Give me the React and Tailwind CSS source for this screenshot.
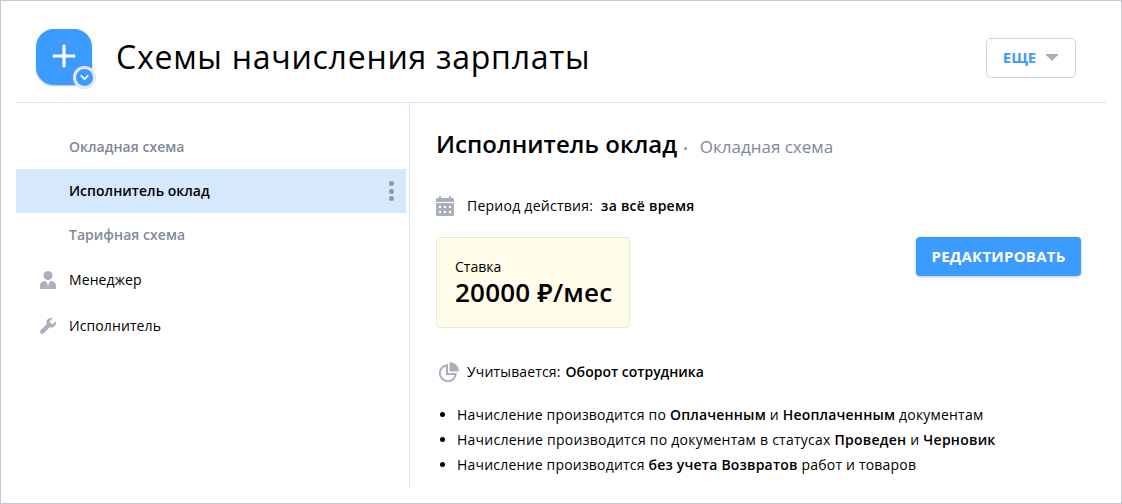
import React from 'react';
import { ChevronDown, Plus } from 'lucide-react';

const font = { fontFamily: '"Open Sans", "Noto Sans", sans-serif' };

const ManagerIcon = () => (
  <svg width="16" height="18" viewBox="0 0 16 18" fill="#a9afbb">
    <circle cx="8" cy="4.500" r="4.500" />
    <path d="M0 18v-3.500C0 11.600 2.600 10 5.600 10L7 12.500 6.500 18zM16 18v-3.500C16 11.600 13.400 10 10.400 10L9 12.500 9.500 18zM7.300 13h1.400l.5 5H6.800z" />
  </svg>
);

const WrenchIcon = () => (
  <svg width="16" height="16" viewBox="0 0 16 16" fill="#a9afbb">
    <path d="M15.800 3.400 13 6.100l-2.400-.7-.7-2.400L12.600.2C10.800-.4 8.700.1 7.500 1.500 6.300 2.800 6 4.700 6.600 6.300L.6 12.300c-.8.8-.8 2.200 0 3 .8.900 2.200.900 3.100 0l6-6c1.600.6 3.500.3 4.800-1 1.400-1.300 1.900-3.300 1.300-4.900z" />
  </svg>
);

const CalendarIcon = () => (
  <svg width="18" height="20" viewBox="0 0 18 20" fill="#a9afbb">
    <path d="M3 0h2v2h8V0h2v2h1.500C17.300 2 18 2.700 18 3.500V6H0V3.500C0 2.700.7 2 1.500 2H3z" />
    <path fillRule="evenodd" d="M0 7h18v11.500c0 .8-.7 1.500-1.500 1.500h-15C.7 20 0 19.300 0 18.500zm3 3v2h2v-2zm5 0v2h2v-2zm5 0v2h2v-2zM3 15v2h2v-2zm5 0v2h2v-2zm5 0v2h2v-2z" />
  </svg>
);

const PieIcon = () => (
  <svg width="20" height="20" viewBox="0 0 20 20" fill="none">
    <path d="M8 3.200a8 8 0 1 0 8.800 8.800H8z" stroke="#a9afbb" strokeWidth="2" />
    <path d="M10.500 0A9.500 9.500 0 0 1 20 9.500h-9.500z" fill="#a9afbb" />
  </svg>
);

const SideItem = ({ label, icon, active, muted, className = 'h-11' }) => (
  <div className={`flex items-center text-[14px] ${className} ${active ? 'bg-[#d5e8fc] text-black font-semibold tracking-[0.03px]' : muted ? 'text-[#7f8998] font-semibold tracking-[0.03px]' : 'text-black font-medium tracking-[0.1px]'}`}>
    <div className="w-[53px] flex justify-end pr-[13px]">{icon}</div>
    <span className="mb-[2px]">{label}</span>
    {active && (
      <div className="ml-auto mr-[12px] flex flex-col gap-[2.500px]">
        <i className="block w-[5px] h-[5px] rounded-full bg-[#8f98a6]" />
        <i className="block w-[5px] h-[5px] rounded-full bg-[#8f98a6]" />
        <i className="block w-[5px] h-[5px] rounded-full bg-[#8f98a6]" />
      </div>
    )}
  </div>
);

export default function App() {
  return (
    <div style={font} className="w-[1122px] h-[504px] bg-white border border-[#c6c9d0] px-[15px] overflow-hidden text-black">
      {/* Header */}
      <div className="h-[102px] flex items-center border-b border-[#d5e8fc] pt-[12px] pl-[20px] pr-[30px]">
        <div className="relative w-[56px] h-[56px] mt-[-1px] rounded-[18px] bg-[#3b9bff] shadow-[0_1px_2px_rgba(0,0,0,0.25)] flex items-center justify-center">
          <Plus size={34} color="white" strokeWidth={2.200} className="mb-[3px]" />
          <div className="absolute left-[37px] top-[37px] w-[23px] h-[23px] rounded-full bg-[#3b9bff] border-[3px] border-[#e4e8ee] flex items-center justify-center">
            <ChevronDown size={13} color="white" strokeWidth={3} />
          </div>
        </div>
        <h1 className="ml-[24px] text-[32px] font-normal leading-none tracking-[0.75px] mb-[1px]">Схемы начисления зарплаты</h1>
        <button className="ml-auto w-[90px] h-[40px] border border-[#cfd2da] rounded-[5px] flex items-center justify-center gap-[9px] text-[15px] font-bold text-[#3b9bff]">
          ЕЩЕ
          <span className="w-0 h-0 border-x-[7px] border-x-transparent border-t-[7px] border-t-[#a9afbb]" />
        </button>
      </div>

      <div className="flex">
        {/* Sidebar */}
        <div className="w-[394px] h-[385px] border-r border-[#d5e8fc] pt-[22px]">
          <div className="w-[390px]">
            <SideItem label="Окладная схема" muted />
            <SideItem label="Исполнитель оклад" active />
            <SideItem label="Тарифная схема" muted />
            <SideItem label="Менеджер" icon={<ManagerIcon />} className="h-[46px]" />
            <SideItem label="Исполнитель" icon={<WrenchIcon />} className="h-[46px]" />
          </div>
        </div>

        {/* Details */}
        <div className="flex-1 pl-[26px] pr-[25px]">
          <div className="flex items-baseline mt-[23px] h-[32px]">
            <h2 className="text-[24px] font-semibold tracking-[0.05px]">Исполнитель оклад</h2>
            <span className="ml-[6px] text-[#7f8998] text-[12px]">•</span>
            <span className="ml-[12px] text-[17px] text-[#7f8998]">Окладная схема</span>
          </div>

          <div className="flex items-center mt-[37px] text-[14px] tracking-[0.25px]">
            <CalendarIcon />
            <span className="ml-[13px]">Период действия:</span>
            <b className="ml-[8px] font-semibold">за всё время</b>
          </div>

          <div className="flex items-start justify-between mt-[21px]">
            <div className="w-[194px] h-[91px] rounded-[4px] border border-[#ece8cf] bg-[#fffde9] pl-[18px] pt-[19px]">
              <div className="text-[14px] leading-[20px]">Ставка</div>
              <div className="text-[26px] leading-[32px] font-semibold tracking-[0.2px] mt-[-1px]">20000 ₽/мес</div>
            </div>
            <button className="w-[165px] h-[39px] rounded-[4px] bg-[#3b9bff] text-white text-[15px] font-bold tracking-[0.25px] shadow-[0_1px_3px_rgba(0,0,0,0.25)]">
              РЕДАКТИРОВАТЬ
            </button>
          </div>

          <div className="flex items-center mt-[33px] ml-[3px] text-[14px]">
            <PieIcon />
            <span className="ml-[8px] tracking-[0.15px]">Учитывается:</span>
            <b className="ml-[5px] font-semibold">Оборот сотрудника</b>
          </div>

          <ul className="list-disc mt-[20px] ml-[21px] text-[14px] leading-[25px] tracking-[0.2px]">
            <li>Начисление производится по <b className="font-semibold">Оплаченным</b> и <b className="font-semibold">Неоплаченным</b> документам</li>
            <li className="tracking-[0.25px]">Начисление производится по документам в статусах <b className="font-semibold">Проведен</b> и <b className="font-semibold">Черновик</b></li>
            <li>Начисление производится <b className="font-semibold">без учета Возвратов</b> работ и товаров</li>
          </ul>
        </div>
      </div>
    </div>
  );
}
